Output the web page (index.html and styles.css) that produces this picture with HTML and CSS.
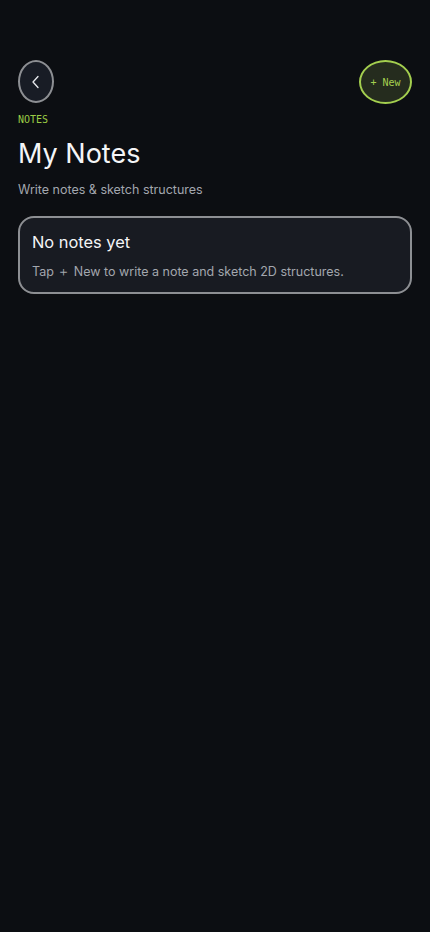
FILE: index.html
```html
<!DOCTYPE html>
<html lang="en">
<head>
    <meta charset="UTF-8">
    <title>My Notes</title>
    <link rel="stylesheet" href="styles.css">
</head>
<body>
<div class="page">
    <div class="topbar">
        <a href="javascript:" class="back">
            <svg width="12" height="14" viewBox="0 0 12 14" fill="none">
                <path d="M8 1.5 L3 7 L8 12.5" stroke="#e8eaee" stroke-width="1.3" stroke-linecap="round" stroke-linejoin="round"/>
            </svg>
        </a>
        <a href="javascript:" class="new">+ New</a>
    </div>

    <div class="eyebrow">NOTES</div>
    <h1 class="title">My Notes</h1>
    <p class="sub">Write notes &amp; sketch structures</p>

    <div class="card">
        <div class="card-title">No notes yet</div>
        <div class="card-text">Tap ＋ New to write a note and sketch 2D structures.</div>
    </div>
</div>
</body>
</html>
```

FILE: styles.css
```css
* {
    margin: 0;
    padding: 0;
    box-sizing: border-box;
}

html, body {
    background: #0c0e12;
    height: 100%;
}

body {
    font-family: Inter, "Noto Sans", sans-serif;
    color: #f2f3f5;
}

.page {
    padding: 60px 18px 0 18px;
}

.topbar {
    display: flex;
    justify-content: space-between;
    align-items: flex-start;
}

.back {
    width: 36px;
    height: 43px;
    border: 2px solid #8d8f93;
    border-radius: 50%;
    background: #181c25;
    display: flex;
    align-items: center;
    justify-content: center;
}

.new {
    width: 53px;
    height: 44px;
    border: 2px solid #a4cf4f;
    border-radius: 50%;
    background: #252c1e;
    color: #a4cf4f;
    font-family: "DejaVu Sans Mono", monospace;
    font-size: 10px;
    text-decoration: none;
    display: flex;
    align-items: center;
    justify-content: center;
}

.eyebrow {
    margin-top: 10px;
    font-family: "DejaVu Sans Mono", monospace;
    font-size: 10px;
    color: #9acb45;
}

.title {
    margin-top: 12px;
    font-size: 27px;
    font-weight: 400;
    line-height: 34px;
    color: #f4f5f7;
}

.sub {
    margin-top: 11px;
    font-size: 12.5px;
    color: #a3a7ae;
}

.card {
    margin-top: 19px;
    border: 2px solid #8d8f93;
    border-radius: 16px;
    background: #181b22;
    padding: 14px 12px 11px 12px;
}

.card-title {
    font-size: 16.4px;
    color: #f4f5f7;
}

.card-text {
    margin-top: 12px;
    font-size: 12.5px;
    color: #a3a7ae;
}
```
